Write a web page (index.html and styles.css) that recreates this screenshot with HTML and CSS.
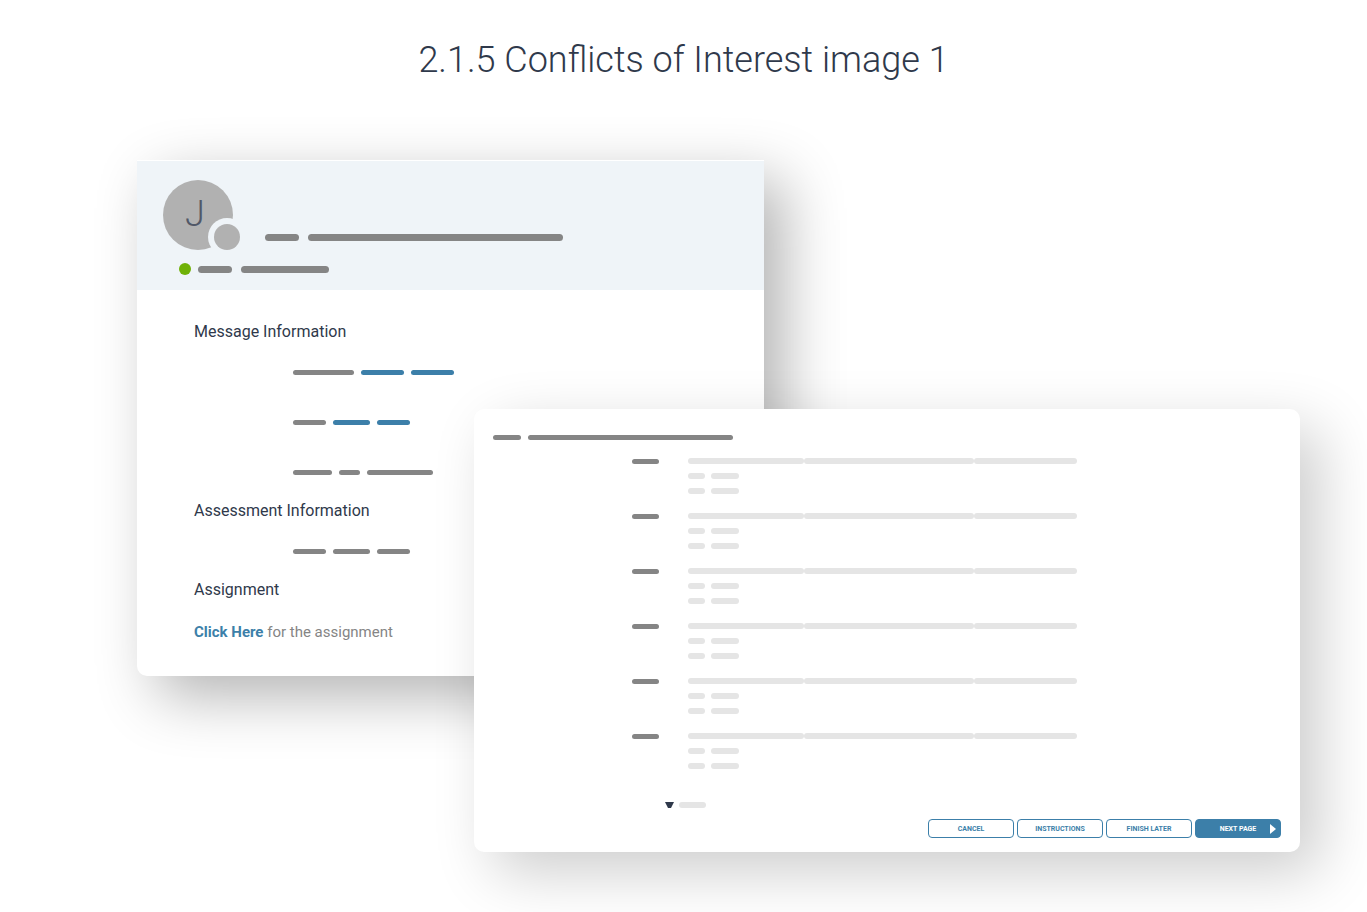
FILE: index.html
```html
<!DOCTYPE html>
<html lang="en">
<head>
    <meta charset="UTF-8">
    <meta name="viewport" content="width=device-width, initial-scale=1.0">
    <title>2.1.5 Conflicts of Interest image 1</title>
    <link rel="stylesheet" href="styles.css">
</head>
<body>
    <h1 class="page-title">2.1.5 Conflicts of Interest image 1</h1>

    <main class="stage">
        <!-- Message window -->
        <article class="card message">
            <header class="message-header">
                <div class="sender">
                    <svg class="avatar" viewBox="0 0 78 71" aria-hidden="true">
                        <circle cx="35" cy="35" r="35" fill="#b1b1b1"/>
                        <text class="avatar-letter" x="22" y="46">J</text>
                        <circle cx="64" cy="57" r="19" fill="#eff4f8"/>
                        <circle cx="64" cy="57" r="13" fill="#b1b1b1"/>
                    </svg>
                    <div class="bars subject">
                        <span class="bar thick w-short"></span>
                        <span class="bar thick w-subject"></span>
                    </div>
                </div>
                <div class="status">
                    <span class="status-dot"></span>
                    <div class="bars">
                        <span class="bar thick w-short"></span>
                        <span class="bar thick w-status"></span>
                    </div>
                </div>
            </header>

            <div class="message-body">
                <section>
                    <h2>Message Information</h2>
                    <div class="details">
                        <div class="bars">
                            <span class="bar w-61"></span>
                            <span class="bar blue w-43"></span>
                            <span class="bar blue w-43"></span>
                        </div>
                        <div class="bars">
                            <span class="bar w-33"></span>
                            <span class="bar blue w-37"></span>
                            <span class="bar blue w-33"></span>
                        </div>
                        <div class="bars">
                            <span class="bar w-39"></span>
                            <span class="bar w-21"></span>
                            <span class="bar w-66"></span>
                        </div>
                    </div>
                </section>
                <section>
                    <h2>Assessment Information</h2>
                    <div class="details">
                        <div class="bars">
                            <span class="bar w-33"></span>
                            <span class="bar w-37"></span>
                            <span class="bar w-33"></span>
                        </div>
                    </div>
                </section>
                <section>
                    <h2>Assignment</h2>
                    <p class="assignment"><a href="#assessment">Click Here</a> for the assignment</p>
                </section>
            </div>
        </article>

        <!-- Assessment window -->
        <article class="card assessment" id="assessment">
            <div class="bars form-title">
                <span class="bar w-28"></span>
                <span class="bar w-title"></span>
            </div>

            <div class="questions">
                <div class="question">
                    <span class="bar w-27"></span>
                    <div class="answers">
                        <div class="text-line"><span class="bar light w-116"></span><span class="bar light w-170"></span><span class="bar light w-103"></span></div>
                        <div class="bars"><span class="bar light w-17"></span><span class="bar light w-28"></span></div>
                        <div class="bars"><span class="bar light w-17"></span><span class="bar light w-28"></span></div>
                    </div>
                </div>
                <div class="question">
                    <span class="bar w-27"></span>
                    <div class="answers">
                        <div class="text-line"><span class="bar light w-116"></span><span class="bar light w-170"></span><span class="bar light w-103"></span></div>
                        <div class="bars"><span class="bar light w-17"></span><span class="bar light w-28"></span></div>
                        <div class="bars"><span class="bar light w-17"></span><span class="bar light w-28"></span></div>
                    </div>
                </div>
                <div class="question">
                    <span class="bar w-27"></span>
                    <div class="answers">
                        <div class="text-line"><span class="bar light w-116"></span><span class="bar light w-170"></span><span class="bar light w-103"></span></div>
                        <div class="bars"><span class="bar light w-17"></span><span class="bar light w-28"></span></div>
                        <div class="bars"><span class="bar light w-17"></span><span class="bar light w-28"></span></div>
                    </div>
                </div>
                <div class="question">
                    <span class="bar w-27"></span>
                    <div class="answers">
                        <div class="text-line"><span class="bar light w-116"></span><span class="bar light w-170"></span><span class="bar light w-103"></span></div>
                        <div class="bars"><span class="bar light w-17"></span><span class="bar light w-28"></span></div>
                        <div class="bars"><span class="bar light w-17"></span><span class="bar light w-28"></span></div>
                    </div>
                </div>
                <div class="question">
                    <span class="bar w-27"></span>
                    <div class="answers">
                        <div class="text-line"><span class="bar light w-116"></span><span class="bar light w-170"></span><span class="bar light w-103"></span></div>
                        <div class="bars"><span class="bar light w-17"></span><span class="bar light w-28"></span></div>
                        <div class="bars"><span class="bar light w-17"></span><span class="bar light w-28"></span></div>
                    </div>
                </div>
                <div class="question">
                    <span class="bar w-27"></span>
                    <div class="answers">
                        <div class="text-line"><span class="bar light w-116"></span><span class="bar light w-170"></span><span class="bar light w-103"></span></div>
                        <div class="bars"><span class="bar light w-17"></span><span class="bar light w-28"></span></div>
                        <div class="bars"><span class="bar light w-17"></span><span class="bar light w-28"></span></div>
                    </div>
                </div>
            </div>

            <div class="more">
                <svg class="caret" viewBox="0 0 9 6" aria-hidden="true"><path d="M0 0h9L6 6H3z" fill="#2f394b"/></svg>
                <span class="bar light w-27"></span>
            </div>

            <footer class="actions">
                <button type="button" class="btn">CANCEL</button>
                <button type="button" class="btn">INSTRUCTIONS</button>
                <button type="button" class="btn">FINISH LATER</button>
                <button type="button" class="btn primary">NEXT PAGE
                    <svg class="next-arrow" viewBox="0 0 6 10" aria-hidden="true"><path d="M0 0l6 5-6 5z" fill="#fff"/></svg>
                </button>
            </footer>
        </article>
    </main>
</body>
</html>
```

FILE: styles.css
```css
* {
    margin: 0;
    padding: 0;
    box-sizing: border-box;
}

body {
    font-family: Roboto, Arial, sans-serif;
    background: #fff;
    color: #2f394b;
    overflow-x: hidden;
}

.page-title {
    padding-top: 36px;
    font-size: 36px;
    font-weight: 300;
    line-height: 48px;
    text-align: center;
}

/* Two windows share the grid row and overlap in the middle column */
.stage {
    display: grid;
    grid-template-columns: 337fr 290fr 536fr;
    align-items: start;
    padding: 76px 67px 60px 137px;
}

.card {
    grid-row: 1;
    background: #fff;
    border-radius: 10px;
}

.message {
    grid-column: 1 / 3;
    border-radius: 0 0 10px 10px;
    box-shadow: 20px 20px 60px rgba(0, 0, 0, 0.3);
}

.assessment {
    grid-column: 2 / 4;
    margin-top: 249px;
    padding: 26px 19px 14px;
    box-shadow: 20px 20px 60px rgba(0, 0, 0, 0.2);
}

/* Placeholder bars */
.bars {
    display: flex;
    align-items: center;
    gap: 7px;
}

.bar {
    display: block;
    height: 5px;
    border-radius: 3px;
    background: #858585;
}

.bar.thick {
    height: 7px;
    border-radius: 4px;
}

.bar.blue {
    background: #3c7fa9;
}

.bar.light {
    height: 6px;
    background: #e5e5e5;
}

.w-17 { width: 17px; }
.w-21 { width: 21px; }
.w-27 { width: 27px; }
.w-28 { width: 28px; }
.w-33 { width: 33px; }
.w-37 { width: 37px; }
.w-39 { width: 39px; }
.w-43 { width: 43px; }
.w-61 { width: 61px; }
.w-66 { width: 66px; }
.w-103 { width: 103px; }
.w-116 { width: 116px; }
.w-170 { width: 170px; }
.w-short { width: 34px; }
.w-status { width: 88px; }
.w-subject { width: 255px; }
.w-title { width: 205px; }

/* Message header */
.message-header {
    padding: 19px 26px 15px;
    background: #eff4f8;
    border-top: 1px solid #fff;
}

.sender {
    display: flex;
    align-items: flex-end;
    gap: 24px;
}

.avatar {
    width: 78px;
    height: 71px;
}

.avatar-letter {
    font-size: 36px;
    font-weight: 300;
    fill: #515868;
}

.subject {
    padding-bottom: 10px;
}

.message-header .bars {
    gap: 9px;
}

.status {
    display: flex;
    align-items: center;
    gap: 7px;
    padding: 12px 16px 0;
}

.status-dot {
    width: 12px;
    height: 12px;
    border-radius: 50%;
    background: #6fb107;
}

/* Message body */
.message-body {
    display: grid;
    gap: 25px;
    padding: 31px 57px 34px;
}

h2 {
    font-size: 16px;
    font-weight: 400;
    line-height: 22px;
}

.details {
    display: grid;
    gap: 45px;
    padding: 27px 0 0 99px;
}

.assignment {
    padding-top: 21px;
    font-size: 15px;
    line-height: 20px;
    color: #858585;
}

.assignment a {
    font-weight: 700;
    color: #3c7fa9;
    text-decoration: none;
}

/* Assessment form */
.questions {
    display: grid;
    gap: 19px;
    padding: 18px 0 0 139px;
}

.question {
    display: flex;
    align-items: flex-start;
    gap: 29px;
}

.question > .bar {
    margin-top: 1px;
}

.answers {
    display: grid;
    gap: 9px;
}

.answers .bars {
    gap: 6px;
}

.text-line {
    display: flex;
}

.more {
    display: flex;
    align-items: center;
    gap: 5px;
    padding: 33px 0 0 172px;
}

.caret {
    width: 9px;
    height: 6px;
}

.actions {
    display: flex;
    justify-content: flex-end;
    gap: 3px;
    padding-top: 11px;
}

.btn {
    position: relative;
    width: 86px;
    height: 19px;
    border: 1px solid #3c7fa9;
    border-radius: 4px;
    background: #fff;
    color: #3c7fa9;
    font-family: inherit;
    font-size: 7px;
    font-weight: 700;
    line-height: 16px;
    cursor: pointer;
}

.btn.primary {
    background: #3c7fa9;
    color: #fff;
}

.next-arrow {
    position: absolute;
    top: 4px;
    right: 4px;
    width: 6px;
    height: 10px;
}
```
